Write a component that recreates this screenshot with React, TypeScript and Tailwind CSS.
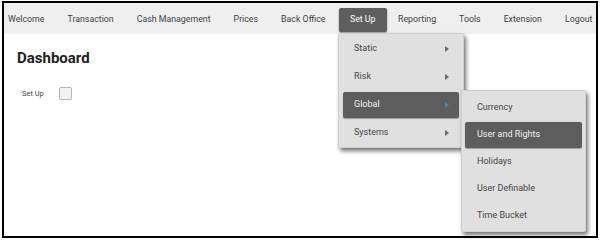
import { ReactNode } from "react";

const navItems = ["Welcome", "Transaction", "Cash Management", "Prices", "Back Office", "Set Up", "Reporting", "Tools", "Extension", "Logout"];

const setupItems = ["Static", "Risk", "Global", "Systems"];
const globalItems = ["Currency", "User and Rights", "Holidays", "User Definable", "Time Bucket"];

function Arrow({ active }: { active?: boolean }) {
  return (
    <svg width="4" height="6" viewBox="0 0 4 6" className="shrink-0">
      <path d="M0 0 L4 3 L0 6 Z" fill={active ? "#4a86b4" : "#6a6a6a"} />
    </svg>
  );
}

function MenuItem({ active, children }: { active?: boolean; children: ReactNode }) {
  return (
    <div
      className={`flex items-center justify-between h-[26px] rounded-[2px] whitespace-nowrap ${
        active ? "bg-[#5d5d5d] text-[#f2f2f2] shadow-[0_1px_1px_rgba(0,0,0,0.3)]" : "text-[#454545]"
      }`}
    >
      {children}
    </div>
  );
}

export default function App() {
  return (
    <div className="relative w-[600px] h-[241px] bg-white pl-[2px] pt-[1px] font-['Roboto',sans-serif]">
      <div className="w-[596px] h-[237px] border-2 border-black overflow-hidden">
        {/* top navigation */}
        <nav className="flex items-center h-[31px] pt-[2px] bg-[#efefef] text-[8.8px] text-[#3f3f3f] whitespace-nowrap">
          {navItems.map((item, i) =>
            item === "Set Up" ? (
              <div
                key={item}
                className="flex items-center h-[24px] ml-[2px] px-[11px] rounded-[2px] bg-[#5e5e5e] text-white shadow-[0_1px_2px_rgba(0,0,0,0.4)]"
              >
                {item}
              </div>
            ) : (
              <div key={item} className={`${i === 0 ? "pl-[4px] pr-[11.5px]" : "px-[11.5px]"}`}>
                {item}
              </div>
            )
          )}
        </nav>

        <div className="pl-[13px] pt-[14px]">
          <h1 className="text-[15px] font-bold text-[#222] leading-[20px]">Dashboard</h1>
          <div className="flex items-center mt-[19px] pl-[5px]">
            <span className="text-[7.5px] text-[#444] w-[37px]">Set Up</span>
            <div className="w-[13px] h-[13px] rounded-[2px] border border-[#b5b5b5] bg-[#f2f2f2]" />
          </div>
        </div>
      </div>

      {/* Set Up dropdown */}
      <div className="absolute left-[338px] top-[33px] w-[126px] h-[115px] px-[4px] pt-[2px] flex flex-col gap-[2px] bg-[#e0e0e0] border border-[#cfcfcf] rounded-[2px] shadow-[2px_3px_4px_rgba(0,0,0,0.55)] text-[9px]">
        {setupItems.map((item) => (
          <MenuItem key={item} active={item === "Global"}>
            <span className="pl-[11px]">{item}</span>
            <span className="pr-[10px]">
              <Arrow active={item === "Global"} />
            </span>
          </MenuItem>
        ))}
      </div>

      {/* Global submenu */}
      <div className="absolute left-[461px] top-[90px] w-[125px] h-[142px] px-[3px] pt-[4px] flex flex-col gap-[1px] bg-[#e0e0e0] border border-[#cfcfcf] rounded-[2px] shadow-[2px_3px_4px_rgba(0,0,0,0.55)] text-[9px]">
        {globalItems.map((item) => (
          <MenuItem key={item} active={item === "User and Rights"}>
            <span className="pl-[12px]">{item}</span>
          </MenuItem>
        ))}
      </div>
    </div>
  );
}
